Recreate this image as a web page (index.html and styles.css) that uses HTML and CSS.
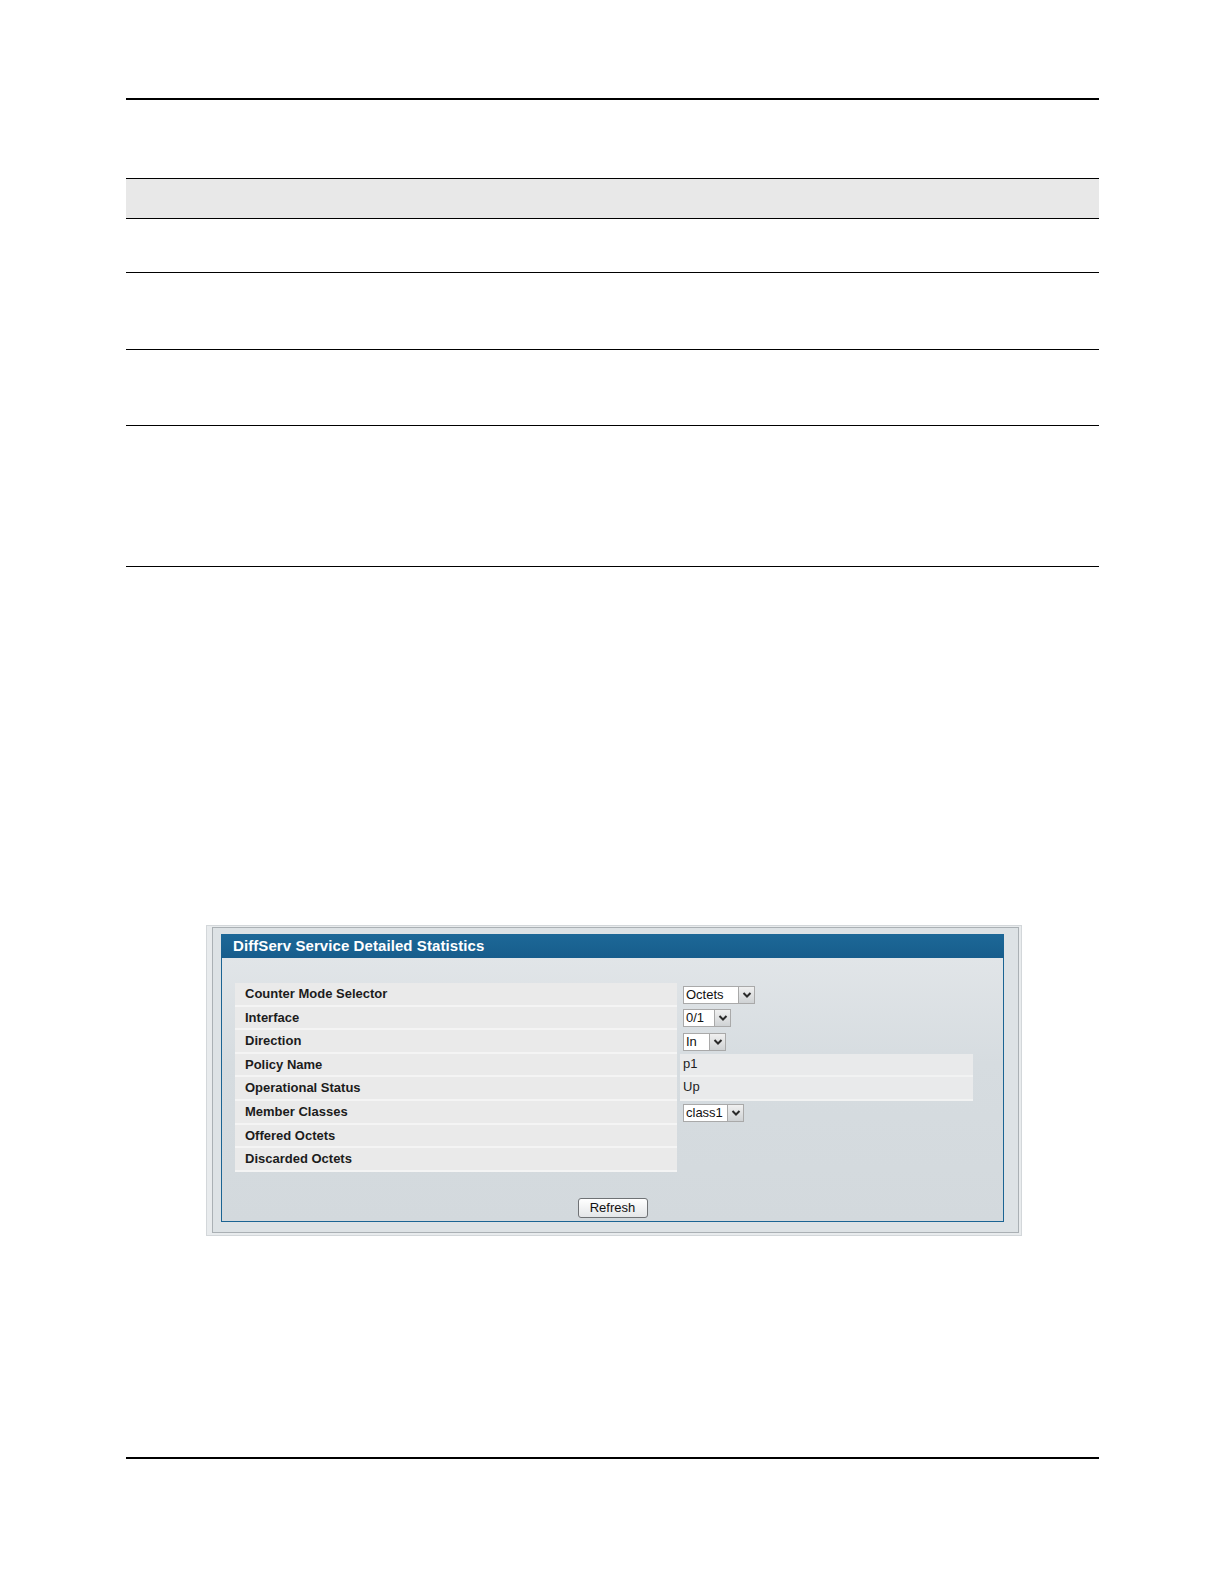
FILE: index.html
```html
<!DOCTYPE html>
<html lang="en">
<head>
<meta charset="utf-8">
<title>DiffServ Service Detailed Statistics</title>
<link rel="stylesheet" href="styles.css">
</head>
<body>
<div class="page">
  <div class="rule"></div>

  <div class="doc-table">
    <div class="doc-row doc-head"></div>
    <div class="doc-row h53"></div>
    <div class="doc-row h76"></div>
    <div class="doc-row h75"></div>
    <div class="doc-row h140"></div>
  </div>

  <div class="shot">
    <div class="shot-inner">
      <div class="panel">
        <div class="panel-head">DiffServ Service Detailed Statistics</div>
        <div class="panel-body">
          <div class="rows">
            <div class="row">
              <div class="label">Counter Mode Selector</div>
              <div class="value">
                <span class="select w72"><span class="sel-text">Octets</span><span class="sel-btn"><svg viewBox="0 0 14 14" width="14" height="14"><polyline points="3.5,5 7,8.5 10.5,5" fill="none" stroke="#2a2a2a" stroke-width="2"/></svg></span></span>
              </div>
            </div>
            <div class="row">
              <div class="label">Interface</div>
              <div class="value">
                <span class="select w48"><span class="sel-text">0/1</span><span class="sel-btn"><svg viewBox="0 0 14 14" width="14" height="14"><polyline points="3.5,5 7,8.5 10.5,5" fill="none" stroke="#2a2a2a" stroke-width="2"/></svg></span></span>
              </div>
            </div>
            <div class="row">
              <div class="label">Direction</div>
              <div class="value">
                <span class="select w43"><span class="sel-text">In</span><span class="sel-btn"><svg viewBox="0 0 14 14" width="14" height="14"><polyline points="3.5,5 7,8.5 10.5,5" fill="none" stroke="#2a2a2a" stroke-width="2"/></svg></span></span>
              </div>
            </div>
            <div class="row">
              <div class="label">Policy Name</div>
              <div class="value filled">p1</div>
            </div>
            <div class="row">
              <div class="label">Operational Status</div>
              <div class="value filled">Up</div>
            </div>
            <div class="row">
              <div class="label">Member Classes</div>
              <div class="value">
                <span class="select w61"><span class="sel-text">class1</span><span class="sel-btn"><svg viewBox="0 0 14 14" width="14" height="14"><polyline points="3.5,5 7,8.5 10.5,5" fill="none" stroke="#2a2a2a" stroke-width="2"/></svg></span></span>
              </div>
            </div>
            <div class="row">
              <div class="label">Offered Octets</div>
              <div class="value"></div>
            </div>
            <div class="row">
              <div class="label">Discarded Octets</div>
              <div class="value"></div>
            </div>
          </div>
          <div class="actions">
            <button class="btn" type="button">Refresh</button>
          </div>
        </div>
      </div>
    </div>
  </div>

  <div class="rule bottom"></div>
</div>
</body>
</html>
```

FILE: styles.css
```css
html, body {
  margin: 0;
  padding: 0;
  background: #ffffff;
}

body {
  font-family: "Liberation Sans", Arial, sans-serif;
  color: #1e1e1e;
}

.page {
  width: 973px;
  margin-left: 126px;
  padding-top: 98px;
  padding-bottom: 100px;
}

.rule {
  height: 2px;
  background: #000;
}

.rule.bottom {
  margin-top: 221px;
}

/* document table (blank) */
.doc-table {
  margin-top: 78px;
  border-top: 1px solid #000;
}

.doc-row {
  border-bottom: 1px solid #000;
}

.doc-head {
  height: 39px;
  background: #e8e8e8;
}

.h53 { height: 53px; }
.h76 { height: 76px; }
.h75 { height: 75px; }
.h140 { height: 140px; }

/* screenshot frame */
.shot {
  width: max-content;
  margin-top: 358px;
  margin-left: 80px;
  border: 1px solid #d3d7da;
  background: #e8ebed;
  padding: 1px 2px 2px 5px;
}

.shot-inner {
  border: 1px solid #aab0b4;
  background: #dde2e5;
  padding: 6px 14px 10px 8px;
}

.panel {
  width: 781px;
  border: 1px solid #1b6493;
  border-top: none;
}

.panel-head {
  height: 24px;
  margin: 0 -1px;
  padding-left: 12px;
  background: linear-gradient(#1d6898, #175d8c);
  color: #ffffff;
  font-weight: bold;
  font-size: 15px;
  letter-spacing: 0.08px;
  line-height: 24px;
}

.panel-body {
  background: linear-gradient(180deg, #e1e5e8 0%, #d6dce0 40%, #d3d9dd 100%);
  padding: 25px 0 3px 13px;
}

.rows {
  display: flex;
  flex-direction: column;
}

.row {
  display: grid;
  grid-template-columns: 442px 293px;
  column-gap: 3px;
  height: 23.6px;
}

.label {
  background: #eaeaea;
  border-bottom: 2px solid #f4f4f4;
  padding-left: 10px;
  font-weight: bold;
  font-size: 13px;
  line-height: 21px;
  color: #1c1c1c;
}

.value {
  display: flex;
  align-items: center;
  padding-left: 3px;
  font-size: 13px;
}

.value.filled {
  align-items: flex-start;
  background: #e9eaeb;
  border-bottom: 2px solid #f1f2f2;
  line-height: 20px;
}

.select {
  display: inline-flex;
  height: 18px;
  box-sizing: border-box;
  background: #ffffff;
  border: 1px solid #a9a9a9;
}

.w72 { width: 72px; }
.w48 { width: 48px; }
.w43 { width: 43px; }
.w61 { width: 61px; }

.sel-text {
  flex: 1;
  padding-left: 2px;
  font-size: 13px;
  line-height: 16px;
  color: #111;
}

.sel-btn {
  width: 15px;
  display: flex;
  align-items: center;
  justify-content: center;
  background: linear-gradient(#f0f0f0, #cfd2d4);
  border-left: 1px solid #a9a9a9;
}

.actions {
  display: flex;
  justify-content: center;
  margin-top: 26px;
  margin-left: -13px;
}

.btn {
  width: 70px;
  height: 20px;
  padding: 0;
  border: 1px solid #6f7275;
  border-radius: 3px;
  background: linear-gradient(#ffffff, #e4e6e8);
  font-family: "Liberation Sans", Arial, sans-serif;
  font-size: 13px;
  color: #111;
  line-height: 18px;
}
```
